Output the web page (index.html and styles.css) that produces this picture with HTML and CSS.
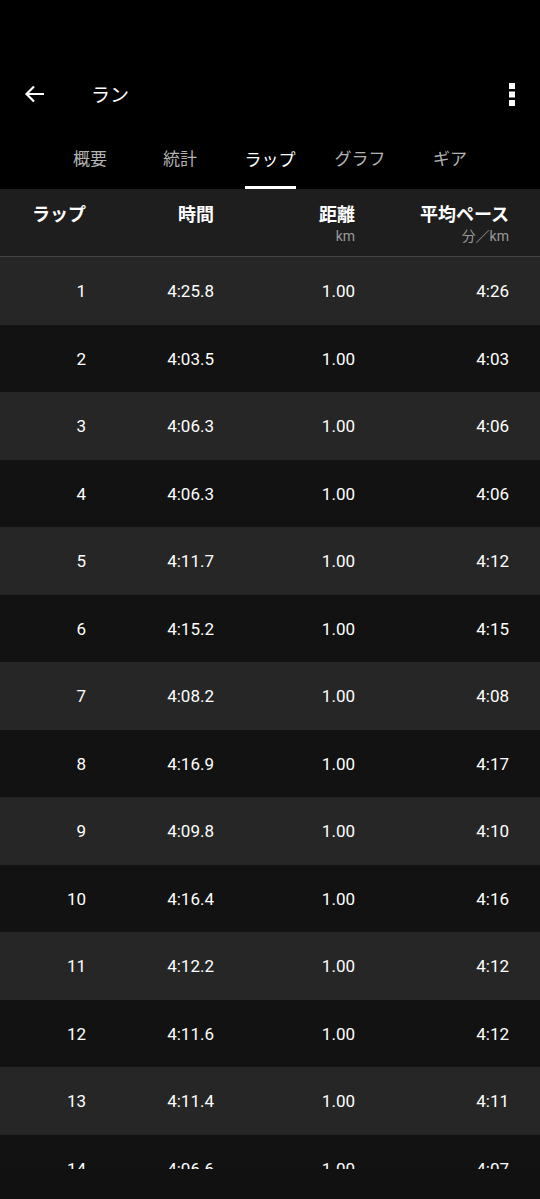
FILE: index.html
```html
<!DOCTYPE html>
<html lang="ja">
<head>
<meta charset="utf-8">
<link rel="stylesheet" href="styles.css">
</head>
<body>
<div class="screen">
  <div class="status"></div>
  <header class="appbar">
    <svg class="back" width="24" height="24" viewBox="0 0 24 24"><path d="M21 12H4M11 4.5L3.5 12l7.5 7.5" fill="none" stroke="#fff" stroke-width="2.2"/></svg>
    <div class="title">ラン</div>
    <svg class="more" width="8" height="24" viewBox="0 0 8 24"><rect x="1" y="1" width="6" height="6" fill="#fff"/><rect x="1" y="9.5" width="6" height="6" fill="#fff"/><rect x="1" y="18" width="6" height="6" fill="#fff"/></svg>
  </header>
  <nav class="tabs">
    <div class="tab">概要</div>
    <div class="tab">統計</div>
    <div class="tab active"><span>ラップ</span></div>
    <div class="tab">グラフ</div>
    <div class="tab">ギア</div>
  </nav>
  <div class="thead">
    <div class="th"><div class="h">ラップ</div></div>
    <div class="th"><div class="h">時間</div></div>
    <div class="th"><div class="h">距離</div><div class="u">km</div></div>
    <div class="th"><div class="h">平均ペース</div><div class="u">分／km</div></div>
  </div>
  <div class="list">
    <div class="row"><div>1</div><div>4:25.8</div><div>1.00</div><div>4:26</div></div>
    <div class="row"><div>2</div><div>4:03.5</div><div>1.00</div><div>4:03</div></div>
    <div class="row"><div>3</div><div>4:06.3</div><div>1.00</div><div>4:06</div></div>
    <div class="row"><div>4</div><div>4:06.3</div><div>1.00</div><div>4:06</div></div>
    <div class="row"><div>5</div><div>4:11.7</div><div>1.00</div><div>4:12</div></div>
    <div class="row"><div>6</div><div>4:15.2</div><div>1.00</div><div>4:15</div></div>
    <div class="row"><div>7</div><div>4:08.2</div><div>1.00</div><div>4:08</div></div>
    <div class="row"><div>8</div><div>4:16.9</div><div>1.00</div><div>4:17</div></div>
    <div class="row"><div>9</div><div>4:09.8</div><div>1.00</div><div>4:10</div></div>
    <div class="row"><div>10</div><div>4:16.4</div><div>1.00</div><div>4:16</div></div>
    <div class="row"><div>11</div><div>4:12.2</div><div>1.00</div><div>4:12</div></div>
    <div class="row"><div>12</div><div>4:11.6</div><div>1.00</div><div>4:12</div></div>
    <div class="row"><div>13</div><div>4:11.4</div><div>1.00</div><div>4:11</div></div>
    <div class="row"><div>14</div><div>4:06.6</div><div>1.00</div><div>4:07</div></div>
  </div>
  <div class="navbar"></div>
</div>
</body>
</html>
```

FILE: styles.css
```css
* { box-sizing: border-box; margin: 0; padding: 0; }
html, body { background: #000; }
body {
  width: 540px;
  height: 1199px;
  overflow: hidden;
  font-family: Roboto, "Noto Sans CJK JP", sans-serif;
  color: #fff;
}
.screen {
  display: flex;
  flex-direction: column;
  height: 1199px;
}
.status { height: 60px; flex: none; }
.appbar {
  height: 67px;
  flex: none;
  display: flex;
  align-items: center;
  padding: 0 0 0 23px;
}
.back { width: 24px; height: 24px; }
.title {
  margin-left: 44px;
  font-family: "Noto Sans CJK JP", sans-serif;
  font-size: 19px;
}
.more { margin-left: auto; margin-right: 24px; width: 8px; height: 24px; }
.tabs {
  height: 62px;
  flex: none;
  display: grid;
  grid-template-columns: repeat(5, 90px);
  padding-left: 45px;
}
.tab {
  font-family: "Noto Sans CJK JP", sans-serif;
  font-size: 17px;
  color: #b3b3b3;
  display: flex;
  justify-content: center;
  align-items: center;
  padding-bottom: 2px;
}
.tab.active { color: #fff; align-items: stretch; }
.tab.active span {
  display: flex;
  align-items: center;
  border-bottom: 3px solid #fff;
  padding-top: 3px;
  margin-bottom: -2px;
}
.thead {
  flex: none;
  height: 68px;
  background: #1e1e1e;
  border-bottom: 1px solid #454545;
  display: grid;
  grid-template-columns: 86px 128px 141px 154px;
  padding-top: 11px;
}
.th { text-align: right; font-family: "Noto Sans CJK JP", sans-serif; }
.h { font-size: 18px; font-weight: 700; line-height: 26px; }
.u {
  font-size: 14px;
  color: #9a9a9a;
  line-height: 21px;
  font-family: Roboto, "Noto Sans CJK JP", sans-serif;
}
.list {
  flex: none;
  height: 912px;
  overflow: hidden;
}
.row {
  height: 67.5px;
  display: grid;
  grid-template-columns: 86px 128px 141px 154px;
  align-items: center;
  font-size: 17px;
  text-align: right;
  padding-top: 1px;
  background: #121212;
}
.row:nth-child(odd) { background: #262626; }
.navbar { flex: 1; background: #111; }
```
